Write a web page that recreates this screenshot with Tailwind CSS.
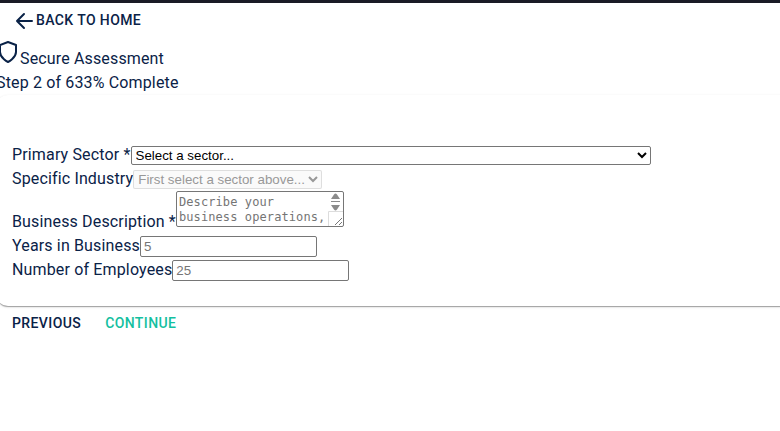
<!DOCTYPE html>
<html lang="en">
<head>
<meta charset="utf-8">
<title>Secure Assessment</title>
<script src="https://cdn.jsdelivr.net/npm/@tailwindcss/browser@4"></script>
</head>
<body class="h-[431px] overflow-hidden bg-white font-[Roboto,sans-serif] text-base leading-6 tracking-[0.15px] text-[#0a2247]">
<div class="h-[3px] bg-[#1a1b26]"></div>
<header class="flex h-[35px] items-start pt-1.5 pl-3">
  <button class="flex items-start text-sm leading-[22px] font-medium tracking-[0.4px]">
    <svg class="size-6" viewBox="0 0 24 24" fill="none" stroke="currentColor" stroke-width="2" stroke-linecap="round" stroke-linejoin="round"><path d="M20 12H5M12 19l-7-7 7-7"/></svg>
    BACK TO HOME
  </button>
</header>
<div class="-ml-1 flex h-[33px] items-start">
  <svg class="mt-0.5 size-6" viewBox="0 0 24 24" fill="none" stroke="currentColor" stroke-width="2" stroke-linecap="round" stroke-linejoin="round"><path d="M12 22s8-4 8-10V5l-8-3-8 3v7c0 6 8 10 8 10z"/></svg>
  <p class="mt-[9px]">Secure Assessment</p>
</div>
<p class="-ml-1 h-6">Step 2 of 633% Complete</p>
<main class="-mr-3 -ml-1 h-[211px] rounded-xl bg-white pt-12 pl-4 shadow-[0_2px_1px_-1px_rgba(0,0,0,0.2),0_1px_1px_0_rgba(0,0,0,0.14),0_1px_3px_0_rgba(0,0,0,0.12)]">
  <div class="flex h-6 items-start">
    <label>Primary Sector *</label>
    <select class="mt-[3px] h-[19px] w-[520px] rounded-[2px] border border-[#767676] bg-white font-['Liberation_Sans',sans-serif] text-[13.333px] leading-normal tracking-normal text-black"><option>Select a sector...</option></select>
  </div>
  <div class="flex h-6 items-start">
    <label>Specific Industry</label>
    <select disabled class="mt-[3px] h-[19px] w-[189px] rounded-[2px] border border-[#767676]/30 bg-[#f8f8f8] font-['Liberation_Sans',sans-serif] text-[13.333px] leading-normal tracking-normal text-[#6d6d6d] opacity-70"><option>First select a sector above...</option></select>
  </div>
  <div class="flex h-[43px] items-start">
    <label class="mt-[19px]">Business Description *</label>
    <div class="relative h-9 w-[168px] rounded-[2px] border border-[#767676] bg-white">
      <textarea class="block h-[34px] w-[151px] resize-none overflow-hidden px-0.5 pt-[3px] font-['DejaVu_Sans_Mono','Liberation_Mono',monospace] text-[12px] leading-[15px] tracking-[0.1px] placeholder:text-[#757575]" placeholder="Describe your business operations,"></textarea>
      <svg class="absolute top-0 right-0 h-[34px] w-[15px]" viewBox="0 0 15 34" fill="none"><path d="M3 7h9L9 2.500Q7.500 .5 6 2.500zM3 13h9L9 17.500Q7.500 19.500 6 17.500z" fill="#8b8b8b"/><path d="M3 9.500h9" stroke="#8b8b8b"/><path d="M.5 34V19.500H15" stroke="#dcdcdc"/><path d="M7 33l7-7M11 33l3-3" stroke="#777"/></svg>
    </div>
  </div>
  <div class="flex h-6 items-start">
    <label>Years in Business</label>
    <input class="mt-0.5 h-[21px] w-[177px] rounded-[2px] border border-[#767676] px-[3px] py-px font-['Liberation_Sans',sans-serif] text-[13.333px] leading-normal tracking-normal placeholder:text-[#757575]" placeholder="5">
  </div>
  <div class="flex h-6 items-start">
    <label>Number of Employees</label>
    <input class="mt-0.5 h-[21px] w-[177px] rounded-[2px] border border-[#767676] px-[3px] py-px font-['Liberation_Sans',sans-serif] text-[13.333px] leading-normal tracking-normal placeholder:text-[#757575]" placeholder="25">
  </div>
</main>
<footer class="flex h-[33px] items-center gap-6 pl-3 text-sm font-medium tracking-[0.4px]">
  <button>PREVIOUS</button>
  <button class="text-[#14bfa0]">CONTINUE</button>
</footer>
</body>
</html>
